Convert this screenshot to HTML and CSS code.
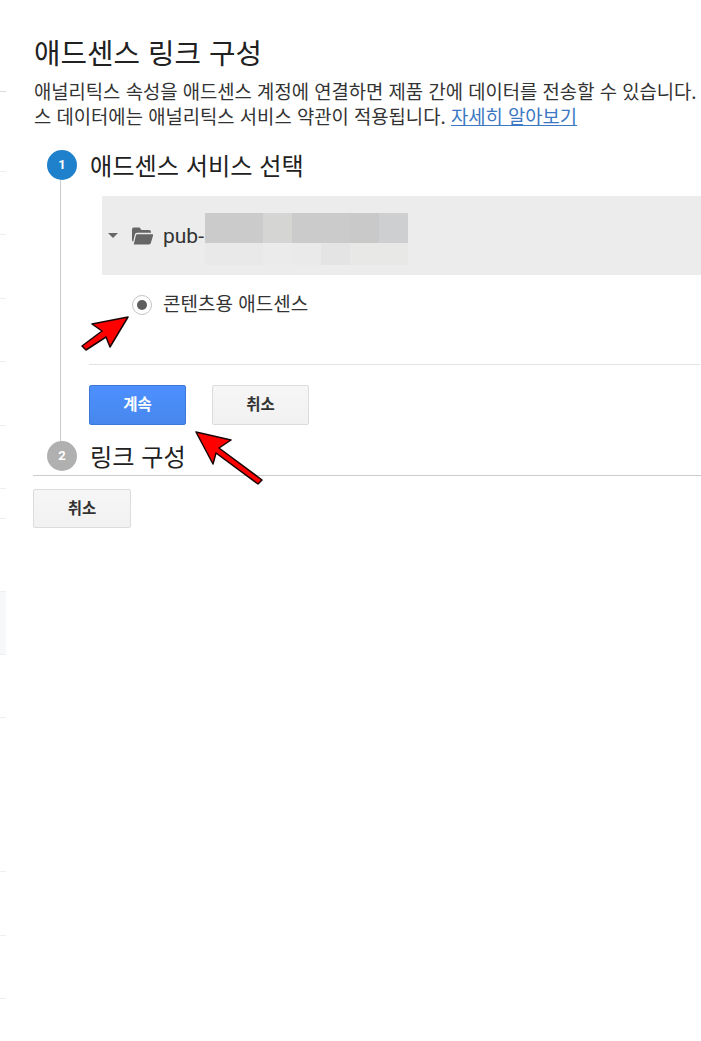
FILE: index.html
```html
<!DOCTYPE html>
<html lang="ko">
<head>
<meta charset="utf-8">
<title>애드센스 링크 구성</title>
<link rel="stylesheet" href="styles.css">
</head>
<body>
<aside class="rail" aria-hidden="true">
  <i class="tick t1"></i><i class="tick t2"></i><i class="tick t3"></i><i class="tick t4"></i><i class="tick t5"></i><i class="tick t6"></i><i class="tick t7"></i><i class="tick t8"></i>
  <div class="rail-block"></div>
  <i class="tick t9"></i><i class="tick t10"></i><i class="tick t11"></i><i class="tick t12"></i>
</aside>
<main class="page">
  <h1 class="title">애드센스 링크 구성</h1>
  <p class="desc">애널리틱스 속성을 애드센스 계정에 연결하면 제품 간에 데이터를 전송할 수 있습니다.<br>스 데이터에는 애널리틱스 서비스 약관이 적용됩니다. <a href="#">자세히 알아보기</a></p>
  <section class="step one">
    <header class="step-head">
      <span class="badge active">1</span>
      <h2>애드센스 서비스 선택</h2>
    </header>
    <div class="step-body">
      <div class="account">
        <span class="caret"></span>
        <svg class="folder" viewBox="0 0 22 18" width="22" height="18"><path fill="#666" d="M1 2.500C1 1.500 1.800 .6 3 .6h5.500l2 2.400H18c1.200 0 2 .8 2 2v.8H6.200C5 5.800 4.200 6.500 3.900 7.600L2.200 14.500H1.600C1.200 14 1 13.500 1 13z"/><path fill="#666" d="M6.400 7.200H22.500l-2.600 8.500c-.2 1-.9 1.700-1.900 1.700H2.700l2.200-8.800c.2-.9.700-1.400 1.500-1.400z"/></svg>
        <span class="pub">pub-</span>
        <span class="blur">
          <span class="blur-row top"><i class="c1"></i><i class="c2"></i><i class="c3"></i><i class="c4"></i><i class="c5"></i></span>
          <span class="blur-row low"><i class="c6"></i><i class="c7"></i><i class="c8"></i><i class="c9"></i><i class="c10"></i></span>
        </span>
      </div>
      <label class="option">
        <span class="radio"><span class="dot"></span></span>
        <span class="option-text">콘텐츠용 애드센스</span>
      </label>
      <div class="actions">
        <button class="btn primary" type="button">계속</button>
        <button class="btn" type="button">취소</button>
      </div>
    </div>
  </section>
  <section class="step two">
    <header class="step-head">
      <span class="badge">2</span>
      <h2>링크 구성</h2>
    </header>
  </section>
  <div class="footer-actions">
    <button class="btn" type="button">취소</button>
  </div>
</main>
<svg class="arrow a1" viewBox="0 0 52 44" width="52" height="44"><path d="M48 7 L12 14 L22 21 L2 36 L6 40 L26 27 L30 37 Z" fill="#ff0000" stroke="#1a0505" stroke-width="1.500" stroke-linejoin="round"/></svg>
<svg class="arrow a2" viewBox="0 0 80 65" width="80" height="65"><path d="M6 7 L41 15 L29 23 L72 55 L68 59 L26 28 L23 39 Z" fill="#ff0000" stroke="#1a0505" stroke-width="1.500" stroke-linejoin="round"/></svg>
</body>
</html>
```
FILE: styles.css
```css
* { box-sizing: border-box; }
html, body { margin: 0; padding: 0; background: #fff; }
body {
  position: relative;
  width: 701px;
  height: 1041px;
  overflow: hidden;
  font-family: "Noto Sans CJK KR", Roboto, sans-serif;
  color: #212121;
}
.rail { position: absolute; left: 0; top: 0; width: 6px; height: 1041px; }
.tick { position: absolute; left: 0; width: 6px; height: 1px; background: #efefef; }
.t1 { top: 91px; background: #d9d9d9; }
.t2 { top: 171px; } .t3 { top: 234px; } .t4 { top: 298px; } .t5 { top: 361px; }
.t6 { top: 425px; } .t7 { top: 488px; } .t8 { top: 518px; }
.t9 { top: 717px; } .t10 { top: 871px; } .t11 { top: 935px; } .t12 { top: 998px; }
.rail-block { position: absolute; left: 0; top: 591px; width: 6px; height: 64px; background: #f7f8fa; border-top: 1px solid #efefef; border-bottom: 1px solid #efefef; }

.page { padding: 34px 0 0 34px; width: 701px; overflow: hidden; }
.title { margin: 0; font-size: 28.8px; line-height: 36px; font-weight: 400; color: #212121; white-space: nowrap; }
.desc { margin: 8px 0 0; font-size: 18.8px; line-height: 25px; color: #333; white-space: nowrap; }
.desc a { color: #3b78c4; text-decoration: underline; }

.step-head { display: flex; align-items: center; gap: 13px; }
.step-head h2 { margin: 0; font-size: 24.2px; line-height: 30px; font-weight: 400; color: #212121; white-space: nowrap; }
.step.one { margin: 22px 0 0 13px; }
.badge { width: 30px; height: 30px; border-radius: 50%; background: #b0b0b0; color: #fff; font: 700 13px/30px Roboto, sans-serif; text-align: center; flex: none; }
.badge.active { background: #1f80cc; }
.step-body { margin-left: 13px; padding: 16px 0 17px 28px; border-left: 1px solid #ccc; width: 640px; }
.account { display: flex; align-items: center; height: 79px; margin-left: 13px; width: 620px; background: #ececec; padding-left: 6px; position: relative; }
.caret { width: 0; height: 0; border-left: 5px solid transparent; border-right: 5px solid transparent; border-top: 5px solid #666; margin-right: 13px; flex: none; }
.folder { flex: none; margin-right: 10px; }
.pub { font: 400 21px/28px Roboto, sans-serif; color: #333; }
.blur { display: flex; flex-direction: column; align-self: flex-start; margin-top: 17px; margin-left: 1px; }
.blur-row { display: flex; }
.blur-row i { display: block; width: 29px; }
.top i { height: 30px; } .low i { height: 22px; }
.top .c1 { width: 58px; background: #cbcbcb; } .top .c2 { background: #d5d5d4; } .top .c3 { width: 58px; background: #cbcbcb; } .top .c4 { background: #c9c9c9; } .top .c5 { background: #cecfd0; }
.low .c6 { width: 58px; background: #e9e9e9; } .low .c7 { background: #ebebeb; } .low .c8 { background: #eaeaea; } .low .c9 { background: #e4e4e4; } .low .c10 { width: 58px; background: #e8e8e6; }

.option { display: flex; align-items: center; gap: 11px; margin: 17px 0 0 43px; height: 26px; font-size: 19px; line-height: 26px; color: #333; }
.option-text { margin-bottom: 4px; }
.radio { width: 20px; height: 20px; border: 1px solid #c4c4c4; border-radius: 50%; background: #fff; display: flex; align-items: center; justify-content: center; flex: none; }
.dot { width: 10px; height: 10px; border-radius: 50%; background: #5f5f5f; }

.actions { display: flex; gap: 26px; margin-top: 46px; border-top: 1px solid #e2e2e2; padding-top: 20px; }
.btn { width: 97px; height: 40px; border: 1px solid #dcdcdc; border-radius: 2px; background: linear-gradient(#f6f6f6, #f1f1f1); color: #333; font: 700 15.5px/20px "Noto Sans CJK KR", sans-serif; padding: 0 0 4px; }
.btn.primary { background: linear-gradient(#4d90fe, #4787ed); border-color: #3b78d8; color: #fff; }

.step.two { margin-left: 13px; margin-top: -1px; }
.step.two .step-head { height: 30px; }
.footer-actions { margin: 4px 0 0 -1px; padding-top: 13px; border-top: 1px solid #ccc; width: 668px; }
.footer-actions .btn { width: 98px; height: 39px; }

.arrow { position: absolute; }
.a1 { left: 80px; top: 310px; }
.a2 { left: 190px; top: 425px; }
```
